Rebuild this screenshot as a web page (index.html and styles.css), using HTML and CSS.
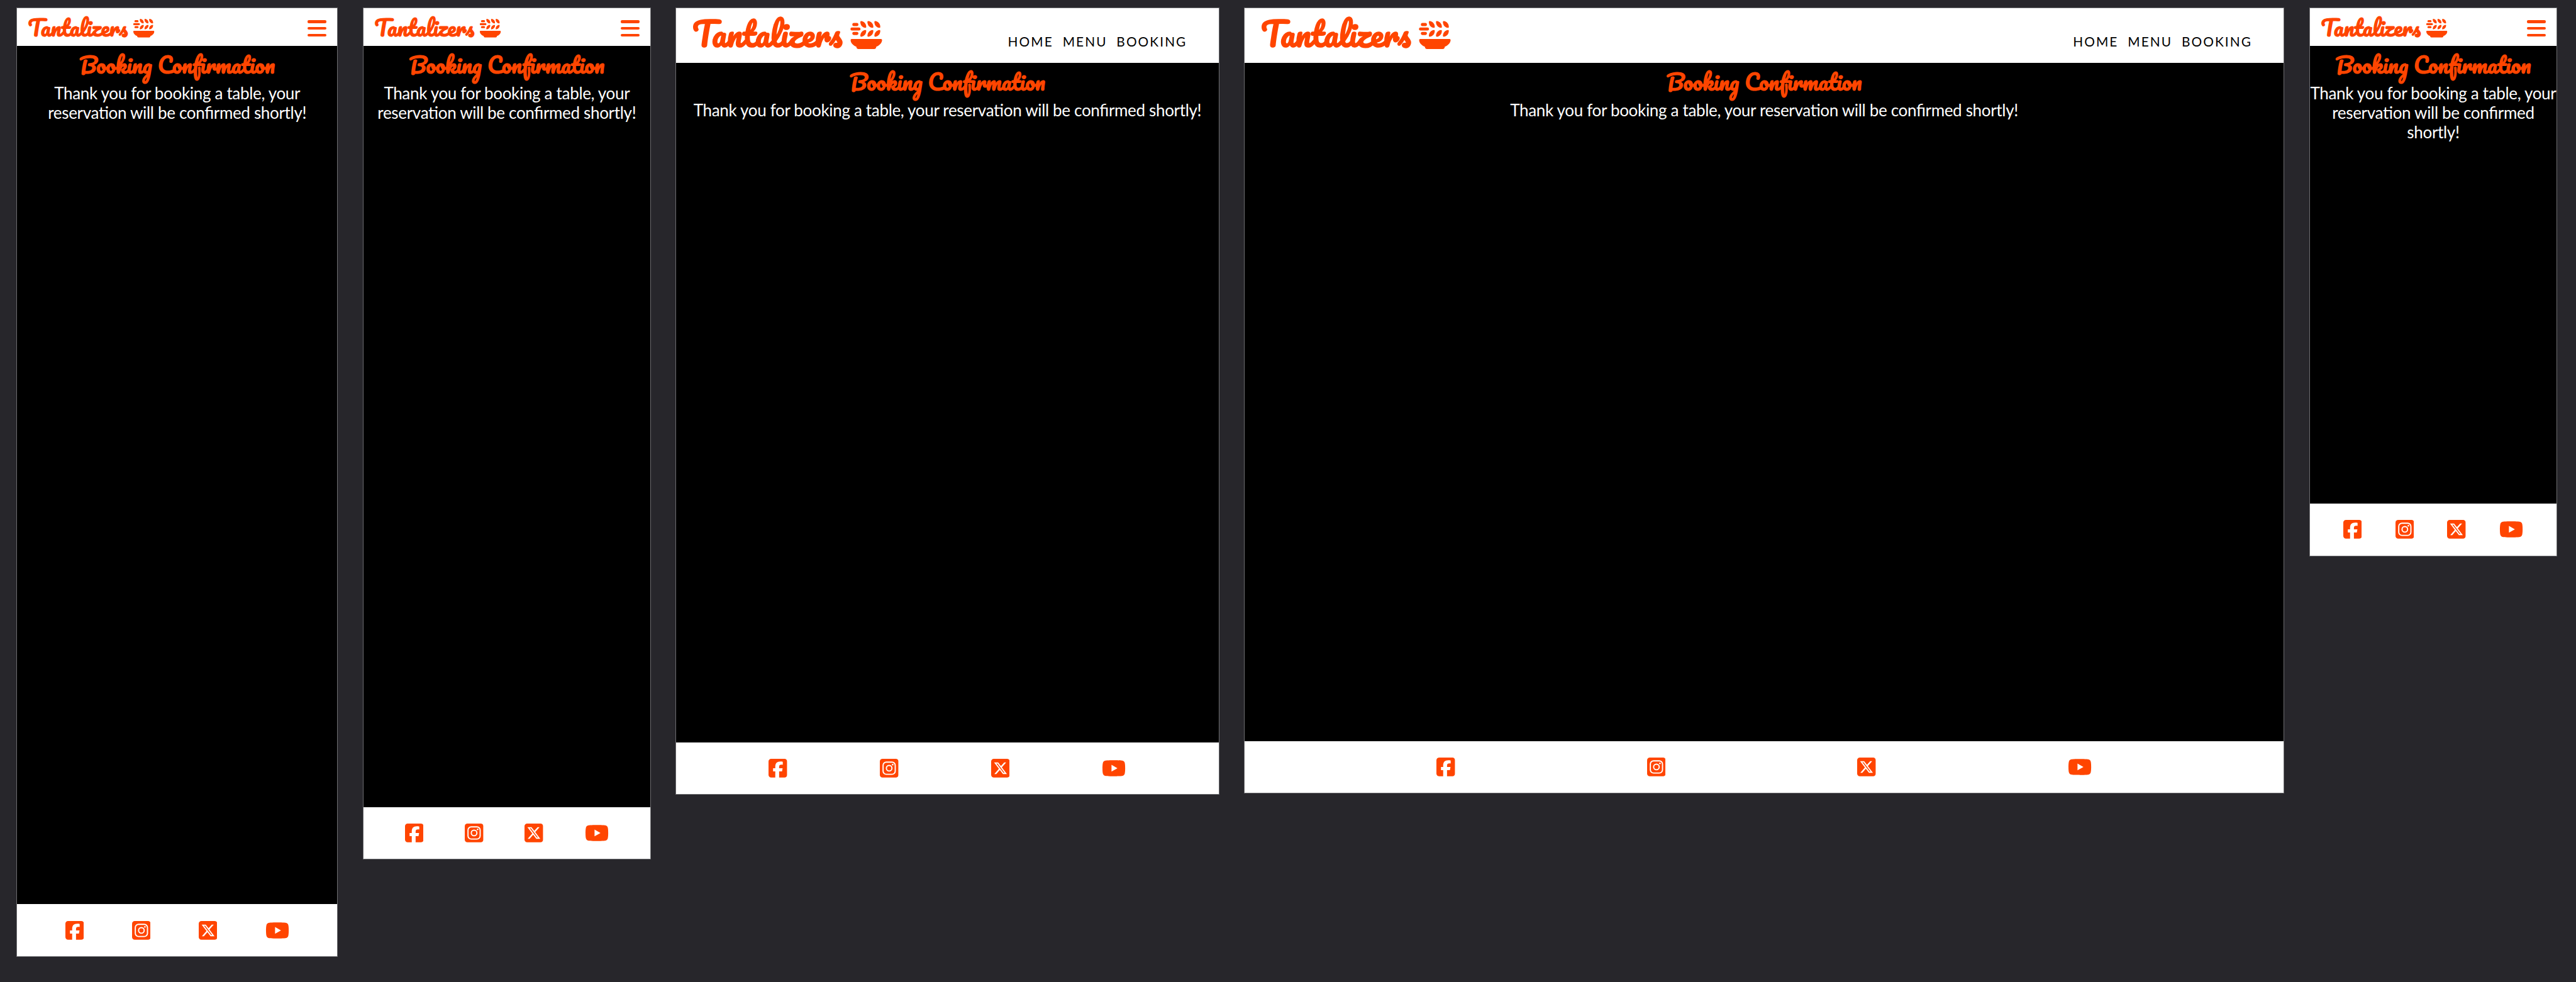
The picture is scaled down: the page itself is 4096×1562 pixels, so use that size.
FILE: index.html
```html
<!DOCTYPE html>
<html lang="en">
<head>
<meta charset="utf-8">
<title>Tantalizers - Booking Confirmation</title>
<link rel="stylesheet" href="styles.css">
</head>
<body>
<svg class="sprite" aria-hidden="true">
  <symbol id="bowl" viewBox="0 0 216 192">
    <rect x="13" y="15" width="41" height="21" rx="10"/>
    <rect x="0" y="45" width="68" height="21" rx="10"/>
    <rect x="13" y="75" width="41" height="21" rx="10"/>
    <path id="leaf" d="M67 8Q67 2 73 2C92 4 107 20 107 42Q107 48 101 48C82 46 67 30 67 8Z"/>
    <use href="#leaf" x="48"/><use href="#leaf" x="95"/>
    <path id="leaf-low" d="M67 102Q67 108 73 108C92 106 107 90 107 68Q107 62 101 62C82 64 67 80 67 102Z"/>
    <use href="#leaf-low" x="48"/><use href="#leaf-low" x="95"/>
    <path d="M9 123H206Q215 123 214 132C212 151 197 168 175 175C174 185 170 191 160 191H55C45 191 41 185 40 175C18 168 3 151 1 132Q0 123 9 123Z"/>
  </symbol>
  <symbol id="facebook" viewBox="0 0 448 512"><path d="M64 32C28.700 32 0 60.700 0 96V416c0 35.300 28.700 64 64 64h98.200V334.200H109.400V256h52.800V222.300c0-87.100 39.400-127.500 125-127.500c16.200 0 44.200 3.200 55.700 6.400V172c-6-.6-16.500-1-29.600-1c-42 0-58.200 15.900-58.200 57.200V256h83.600l-14.400 78.200H255V480H384c35.300 0 64-28.700 64-64V96c0-35.300-28.700-64-64-64H64z"/></symbol>
  <symbol id="instagram" viewBox="0 0 448 512">
    <rect y="32" width="448" height="448" rx="64"/>
    <g fill="none" stroke="#fff" stroke-width="29"><rect x="78" y="110" width="292" height="292" rx="78"/><circle cx="224" cy="256" r="67"/></g>
    <circle cx="309" cy="171" r="19" fill="#fff"/>
  </symbol>
  <symbol id="x-social" viewBox="0 0 448 512"><path d="M64 32C28.700 32 0 60.700 0 96V416c0 35.300 28.700 64 64 64H384c35.300 0 64-28.700 64-64V96c0-35.300-28.700-64-64-64H64zm297.100 84L257.300 234.600 379.400 396H283.800L209 298.100 123.300 396H75.800l111-126.900L69.700 116h98l67.700 89.500L313.600 116h47.500zM323.300 367.600L153.400 142.900H125.100L296.900 367.600h26.300z"/></symbol>
  <symbol id="youtube" viewBox="0 0 576 512"><path d="M549.655 124.083c-6.281-23.650-24.787-42.276-48.284-48.597C458.781 64 288 64 288 64S117.220 64 74.629 75.486c-23.497 6.322-42.003 24.947-48.284 48.597-11.412 42.867-11.412 132.305-11.412 132.305s0 89.438 11.412 132.305c6.281 23.650 24.787 41.500 48.284 47.821C117.220 448 288 448 288 448s170.780 0 213.371-11.486c23.497-6.321 42.003-24.171 48.284-47.821 11.412-42.867 11.412-132.305 11.412-132.305s0-89.438-11.412-132.305zm-317.510 213.508V175.185l142.739 81.205-142.739 81.201z"/></symbol>
</svg>

<div class="board">
  <section class="screen screen-phone-l">
    <header class="bar">
      <svg class="logo" viewBox="-48 -3 1500 369"><text x="63" y="256">Tantalizers</text><use href="#bowl" x="1130" y="78" width="216" height="192"/></svg>
      <button class="burger" aria-label="Menu"><i></i><i></i><i></i></button>
    </header>
    <main class="content">
      <h1 class="title">Booking Confirmation</h1>
      <p class="message">Thank you for booking a table, your reservation will be confirmed shortly!</p>
    </main>
    <footer class="social"><svg><use href="#facebook"/></svg><svg><use href="#instagram"/></svg><svg><use href="#x-social"/></svg><svg class="wide"><use href="#youtube"/></svg></footer>
  </section>

  <section class="screen screen-phone-m">
    <header class="bar">
      <svg class="logo" viewBox="-48 -3 1500 369"><text x="63" y="256">Tantalizers</text><use href="#bowl" x="1130" y="78" width="216" height="192"/></svg>
      <button class="burger" aria-label="Menu"><i></i><i></i><i></i></button>
    </header>
    <main class="content">
      <h1 class="title">Booking Confirmation</h1>
      <p class="message">Thank you for booking a table, your reservation will be confirmed shortly!</p>
    </main>
    <footer class="social"><svg><use href="#facebook"/></svg><svg><use href="#instagram"/></svg><svg><use href="#x-social"/></svg><svg class="wide"><use href="#youtube"/></svg></footer>
  </section>

  <section class="screen screen-tablet">
    <header class="bar bar-large">
      <svg class="logo" viewBox="-48 -3 1500 369"><text x="63" y="256">Tantalizers</text><use href="#bowl" x="1130" y="78" width="216" height="192"/></svg>
      <nav class="nav"><a>HOME</a><a>MENU</a><a>BOOKING</a></nav>
    </header>
    <main class="content">
      <h1 class="title">Booking Confirmation</h1>
      <p class="message">Thank you for booking a table, your reservation will be confirmed shortly!</p>
    </main>
    <footer class="social"><svg><use href="#facebook"/></svg><svg><use href="#instagram"/></svg><svg><use href="#x-social"/></svg><svg class="wide"><use href="#youtube"/></svg></footer>
  </section>

  <section class="screen screen-desktop">
    <header class="bar bar-large">
      <svg class="logo" viewBox="-48 -3 1500 369"><text x="63" y="256">Tantalizers</text><use href="#bowl" x="1130" y="78" width="216" height="192"/></svg>
      <nav class="nav"><a>HOME</a><a>MENU</a><a>BOOKING</a></nav>
    </header>
    <main class="content">
      <h1 class="title">Booking Confirmation</h1>
      <p class="message">Thank you for booking a table, your reservation will be confirmed shortly!</p>
    </main>
    <footer class="social"><svg><use href="#facebook"/></svg><svg><use href="#instagram"/></svg><svg><use href="#x-social"/></svg><svg class="wide"><use href="#youtube"/></svg></footer>
  </section>

  <section class="screen screen-phone-s">
    <header class="bar">
      <svg class="logo" viewBox="-48 -3 1500 369"><text x="63" y="256">Tantalizers</text><use href="#bowl" x="1130" y="78" width="216" height="192"/></svg>
      <button class="burger" aria-label="Menu"><i></i><i></i><i></i></button>
    </header>
    <main class="content">
      <h1 class="title">Booking Confirmation</h1>
      <p class="message">Thank you for booking a table, your reservation will be confirmed shortly!</p>
    </main>
    <footer class="social"><svg><use href="#facebook"/></svg><svg><use href="#instagram"/></svg><svg><use href="#x-social"/></svg><svg class="wide"><use href="#youtube"/></svg></footer>
  </section>
</div>
</body>
</html>
```

FILE: styles.css
```css
:root {
  --orange: #ff4500;
  --board: #27262b;
}

html { font-size: 7.0596px; }

* { box-sizing: border-box; }

body {
  margin: 0;
  background: var(--board);
  font-family: Lato, sans-serif;
  overflow: hidden;
}

.sprite {
  position: absolute;
  width: 0;
  height: 0;
}

.board {
  display: flex;
  align-items: flex-start;
  gap: 5.6rem;
  height: 100vh;
  padding: 1.7rem 0 0 3.7rem;
}

.screen {
  display: flex;
  flex: none;
  flex-direction: column;
  border: 0.2rem solid #6d6d70;
  background: #000;
}

.screen-phone-l { width: 72.4rem; height: 213.9rem; }
.screen-phone-m { width: 64.9rem; height: 192rem; }
.screen-tablet { width: 122.4rem; height: 177.4rem; }
.screen-desktop { width: 234.3rem; height: 177.1rem; }
.screen-phone-s { width: 55.9rem; height: 123.6rem; }

.bar {
  display: flex;
  flex: none;
  justify-content: space-between;
  align-items: flex-start;
  height: 8.55rem;
  padding-right: 2.4rem;
  background: #fff;
}

.bar-large {
  height: 12.35rem;
  padding-right: 7.1rem;
}

.logo {
  width: 33.33rem;
  height: 8.2rem;
  margin-top: 0.6rem;
  overflow: visible;
  fill: var(--orange);
}

.bar-large .logo {
  width: 50rem;
  height: 12.3rem;
  margin-top: 0.1rem;
}

.logo text {
  font-family: Pacifico, cursive;
  font-size: 216px;
  font-weight: 700;
}

.burger {
  display: flex;
  flex-direction: column;
  gap: 0.9rem;
  width: 4.25rem;
  margin: 2.75rem 0 0;
  padding: 0;
  border: 0;
  background: none;
}

.burger i {
  height: 0.6rem;
  border-radius: 0.3rem;
  background: var(--orange);
}

.nav {
  display: flex;
  gap: 2.1rem;
  margin-top: 5.7rem;
  color: #000;
  font-size: 2.95rem;
  line-height: 3.54rem;
  letter-spacing: 0.295rem;
}

.content {
  flex: 1;
  color: #fff;
  text-align: center;
}

.title {
  margin: 0;
  color: var(--orange);
  font-family: Pacifico, cursive;
  font-size: 4.8rem;
  font-weight: 700;
  line-height: 8.43rem;
}

.message {
  margin: 0;
  font-size: 3.69rem;
  line-height: 4.43rem;
  letter-spacing: -0.048rem;
  font-feature-settings: "liga" 1;
}

.social {
  display: flex;
  flex: none;
  justify-content: space-evenly;
  align-items: center;
  height: 11.7rem;
  background: #fff;
}

.social svg {
  width: 4.2rem;
  height: 4.8rem;
  fill: var(--orange);
}

.social .wide { width: 5.4rem; }
```
